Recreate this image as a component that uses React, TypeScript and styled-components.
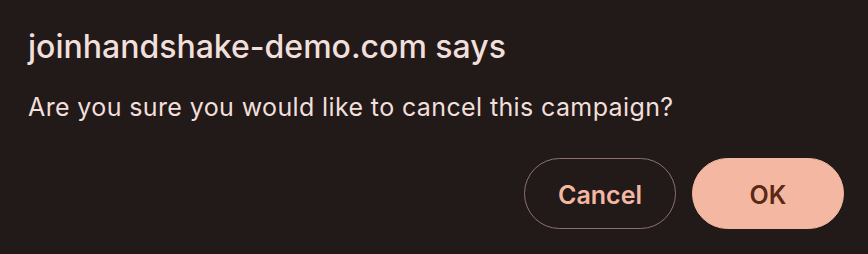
import React from "react";
import styled, { createGlobalStyle } from "styled-components";

const Global = createGlobalStyle`
  html, body { margin: 0; padding: 0; background: #211a19; }
  body { font-family: Inter, "Noto Sans", sans-serif; -webkit-font-smoothing: antialiased; }
`;

const Dialog = styled.div`
  box-sizing: border-box;
  width: 868px;
  height: 254px;
  background: #211a19;
  padding: 27px 24px 25px 28px;
  display: flex;
  flex-direction: column;
`;

const Title = styled.h1`
  margin: 0;
  font-size: 32px;
  font-weight: 500;
  line-height: 40px;
  color: #f1dfdb;
`;

const Message = styled.p`
  margin: 24px 0 0;
  font-size: 25px;
  font-weight: 400;
  letter-spacing: 0.38px;
  line-height: 32px;
  color: #f1dfdb;
`;

const Actions = styled.div`
  margin-top: auto;
  display: flex;
  justify-content: flex-end;
  gap: 16px;
`;

const Button = styled.button<{ $primary?: boolean }>`
  box-sizing: border-box;
  width: 152px;
  height: 71px;
  padding: 3px 0 0;
  border-radius: 36px;
  font-family: Inter, "Noto Sans", sans-serif;
  font-size: 25px;
  font-weight: 600;
  cursor: pointer;
  border: 1.5px solid ${(p) => (p.$primary ? "#f4b8a2" : "#8c726b")};
  background: ${(p) => (p.$primary ? "#f4b8a2" : "transparent")};
  color: ${(p) => (p.$primary ? "#5c2816" : "#f4b8a2")};
`;

export default function App() {
  return (
    <>
      <Global />
      <Dialog>
        <Title>joinhandshake-demo.com says</Title>
        <Message>Are you sure you would like to cancel this campaign?</Message>
        <Actions>
          <Button>Cancel</Button>
          <Button $primary>OK</Button>
        </Actions>
      </Dialog>
    </>
  );
}
